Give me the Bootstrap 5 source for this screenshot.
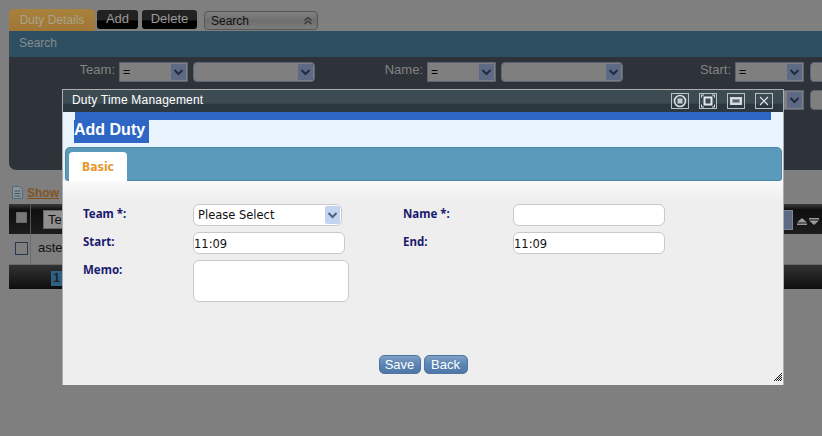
<!DOCTYPE html>
<html lang="en">
<head>
<meta charset="utf-8">
<title>Duty Time Management</title>
<link rel="stylesheet" href="https://cdn.jsdelivr.net/npm/bootstrap@5.3.0/dist/css/bootstrap.min.css">
<style>
html,body{height:436px;overflow:hidden}
body{background:#7f7f7f;font-family:"Liberation Sans",Arial,sans-serif;position:relative;width:822px;padding:9px 0 0 9px;color:#111}
.tabrow{height:22px;gap:0}
.duty-tab{width:86px;height:22px;background:linear-gradient(#a8823c,#a07636);border-radius:5px 5px 0 0;color:#a9a48c;font-size:12px;line-height:22px;text-align:center}
.blk{height:19px;margin-top:1px;background:linear-gradient(#222 0,#222 50%,#000 60%,#050505);border-radius:3px;color:#9a9a9a;font-size:13px;line-height:18px;text-align:center}
.b-add{width:41px;margin-left:2px}
.b-del{width:55px;margin-left:4px}
.search-drop{width:114px;height:19px;margin:2px 0 0 7px;border:1px solid #555;border-radius:4px;background:linear-gradient(#808080,#6e6e6e 55%,#7c7c7c);font-size:12px;line-height:18px;padding-left:6px;color:#111}
.search-drop svg{position:absolute;right:4px;top:4px}
.panel-head{height:26px;background:#2e4f62;color:#868c8c;font-size:12px;line-height:25px;padding-left:10px}
.panel-body{height:113px;background:#2d3338;border-radius:0 0 0 7px}
.frow{height:28px;padding-top:5px}
.flab{color:#838383;font-size:13px;text-align:right;line-height:16px;flex:none}
.l1{width:106px}.l2{width:108px}.l3{width:108px}
.op,.val{height:20px;flex:none;appearance:none;background-color:#7f7f7f;background-image:url("data:image/svg+xml,%3Csvg xmlns='http://www.w3.org/2000/svg' width='15' height='16'%3E%3Crect width='15' height='16' fill='%235d6a85'/%3E%3Cpath d='M3.5 6l4 4 4-4' fill='none' stroke='%23232b3d' stroke-width='2'/%3E%3C/svg%3E");background-repeat:no-repeat;background-position:right 1px center;border:1px solid #5c6672;font-size:12px;color:#000;padding:0 0 0 3px;font-family:inherit}
.op{width:69px;margin-left:4px}
.val{width:122px;margin-left:5px;border-radius:4px}
.val.cut{width:30px;margin-left:6px;background-image:none}
.show-row{height:34px;padding-top:16px;padding-left:3px;font-size:12px}
.show-row a{color:#83531d;font-weight:700;margin-left:4px;line-height:15px}
.grid-head{height:30px;background:linear-gradient(#3a3a3a,#0f0f0f 20%,#1d1d1d);position:relative}
.chk{width:13px;height:13px;flex:none;border:1px solid #243a50;background:#7f7f7f}
.hchk{background:#777;border-color:#6a6a6a;width:11px;height:11px;margin:8px 0 0 7px}
.sep{width:1px;background:#555;margin-left:3px;flex:none}
.te{width:60px;height:19px;margin:6px 0 0 12px;background:#8f8f8f;border:1px solid #666;color:#111;font-size:13px;line-height:17px;padding-left:4px}
.grid-row{height:31px;border-bottom:1px solid #6a6a6a}
.grid-row .chk{margin:8px 0 0 6px}
.grid-row .sep{background:#6a6a6a;margin-left:2px}
.aste{font-size:13px;color:#111;line-height:28px;margin-left:7px}
.grid-foot{height:24px;background:linear-gradient(#333,#0d0d0d)}
.pg{width:11px;height:15px;margin:6px 0 0 42px;background:#2f6183;color:#222;font-size:12px;font-weight:700;text-align:center;line-height:15px}
.right-tools{position:absolute;right:3px;top:6px}
.right-sel{width:15px;height:20px;background:#5d6a85;border:1px solid #7b8799;margin-right:4px}
.right-tools svg{margin-top:8px;margin-right:2px;display:block}
.right-tools svg:last-child{margin-right:0}

.dialog{position:absolute;left:62px;top:89px;width:722px;height:296px;border:1px solid #a9aeb0;background:#eee;font-family:"Liberation Sans",Arial,sans-serif}
.dlg-title{height:22px;background:linear-gradient(#3c4a52 0,#3c4a52 60%,#2c383f 65%);color:#fff;font-size:12px;letter-spacing:.2px;line-height:20px;padding-left:9px}
.winbtn{width:18px;height:16px;border:1px solid #b9c1c6;margin-top:3px;margin-left:10px}
.winbtn svg{display:block}
.win-wrap{margin-right:10px}
.dlg-band{height:35px;background:#eaf4ff;position:relative}
.blue-bar{height:8px;margin:0 12px 0 12px;background:#2d66c4}
.add-title{display:block;margin-left:11px;height:23px;background:#2d66c4;color:#fff;font-weight:700;font-size:16px;line-height:19px;width:75px;white-space:nowrap}
.dlg-tabs{height:34px;margin:0 1px 0 2px;background:#5b9aba;border:1px solid #4a86a6;border-radius:5px 5px 3px 3px;padding:4px 0 0 3px}
.basic-tab{width:58px;height:29px;background:#fff;border-radius:4px 4px 0 0;color:#e8982c;font-family:"DejaVu Sans",sans-serif;font-size:12px;font-weight:700;font-stretch:condensed;line-height:30px;text-align:center}
.dlg-body{height:204px;background:linear-gradient(#fafafa,#eee 20px);padding-top:23px;position:relative}
.frm{padding-left:20px}
.lab{font-family:"Noto Sans",sans-serif;font-size:11.500px;font-weight:700;color:#1a1a6e;flex:none;line-height:16px;padding-top:2px}
.lw1{width:110px}.lw2{width:110px}
.cell{flex:none}
.c1{width:210px}
.fld{display:block;height:22px;width:152px;border:1px solid #c9c9c9;border-radius:6px;background:#fff;font-family:"DejaVu Sans",sans-serif;font-size:11.500px;padding:2px 0 0 0;color:#111}
.fsel{width:149px;appearance:none;padding-left:4px;background-image:url("data:image/svg+xml,%3Csvg xmlns='http://www.w3.org/2000/svg' width='15' height='18'%3E%3Crect width='15' height='18' rx='2' fill='%23c3d4f0'/%3E%3Cpath d='M3.5 7l4 4 4-4' fill='none' stroke='%234d6185' stroke-width='2'/%3E%3C/svg%3E");background-repeat:no-repeat;background-position:right 1px center}
.fmemo{height:42px;width:156px;resize:none}
.r{margin-bottom:6px}
.actions{position:absolute;left:0;right:0;top:174px;gap:3px}
.sbtn{height:19px;border:1px solid #4d75a3;border-radius:5px;background:linear-gradient(#7fa0c4,#5a84b4 50%,#4f78a8);color:#fff;font-size:13px;line-height:17px;padding:0;text-align:center}
.s-save{width:42px}.s-back{width:44px}
.grip{position:absolute;right:1px;bottom:4px}
</style>
</head>
<body>
<div class="d-flex tabrow">
  <div class="duty-tab">Duty Details</div>
  <div class="blk b-add">Add</div>
  <div class="blk b-del">Delete</div>
  <div class="search-drop position-relative">Search
    <svg width="10" height="10" viewBox="0 0 10 10"><path d="M1.500 4.500L5 1.500 8.500 4.500M1.500 8L5 5 8.500 8" fill="none" stroke="#333" stroke-width="1.100"/></svg>
  </div>
</div>
<div class="panel-head">Search</div>
<div class="panel-body">
  <div class="d-flex frow">
    <div class="flab l1">Team:</div><select class="op"><option>=</option></select><select class="val"></select>
    <div class="flab l2">Name:</div><select class="op"><option>=</option></select><select class="val"></select>
    <div class="flab l3">Start:</div><select class="op"><option>=</option></select><select class="val cut"></select>
  </div>
  <div class="d-flex frow">
    <div class="flab l1"></div><select class="op"></select><select class="val"></select>
    <div class="flab l2"></div><select class="op"></select><select class="val"></select>
    <div class="flab l3"></div><select class="op"></select><select class="val cut"></select>
  </div>
</div>
<div class="show-row d-flex">
  <svg width="11" height="13" viewBox="0 0 11 13"><path d="M.5.500h7l3 3v9H.500z" fill="#8a969c" stroke="#4f6a7c"/><path d="M2.500 5h6M2.500 7.500h6M2.500 10h6" stroke="#40525f"/></svg>
  <a href="#">Show</a>
</div>
<div class="grid-head d-flex">
  <div class="chk hchk"></div><div class="sep"></div><div class="te">Te</div>
  <div class="right-tools d-flex">
    <div class="right-sel"></div>
    <svg width="10" height="7" viewBox="0 0 10 7"><path d="M5 0l5 4.500H0z" fill="#9a9a9a"/><rect y="5.500" width="10" height="1.500" fill="#9a9a9a"/></svg>
    <svg width="10" height="7" viewBox="0 0 10 7"><rect width="10" height="1.500" fill="#9a9a9a"/><path d="M0 2.500h10L5 7z" fill="#9a9a9a"/></svg>
  </div>
</div>
<div class="grid-row d-flex">
  <div class="chk"></div><div class="sep"></div><div class="aste">aste</div>
</div>
<div class="grid-foot d-flex"><div class="pg">1</div></div>

<div class="dialog">
  <div class="dlg-title d-flex justify-content-between">
    <span>Duty Time Management</span>
    <div class="d-flex win-wrap">
      <div class="winbtn"><svg width="16" height="14" viewBox="0 0 16 14"><circle cx="8" cy="7" r="5.500" fill="none" stroke="#d8dde0" stroke-width="1.600"/><rect x="5.500" y="4.500" width="5" height="5" fill="#c4cacd"/></svg></div>
      <div class="winbtn"><svg width="16" height="14" viewBox="0 0 16 14"><rect x="4.500" y="3.500" width="7" height="7" fill="none" stroke="#e3e7ea" stroke-width="2"/><path d="M1.500 1v2.500M1.500 1H4M14.500 1v2.500M14.500 1H12M1.500 13v-2.500M1.500 13H4M14.500 13v-2.500M14.500 13H12" fill="none" stroke="#e3e7ea"/></svg></div>
      <div class="winbtn"><svg width="16" height="14" viewBox="0 0 16 14"><rect x="2" y="3" width="12" height="8" fill="#d5dade"/><rect x="4.500" y="5.500" width="7" height="3" fill="#54636c"/></svg></div>
      <div class="winbtn"><svg width="16" height="14" viewBox="0 0 16 14"><path d="M4 3l8 8M12 3l-8 8" stroke="#e3e7ea" stroke-width="1.200"/></svg></div>
    </div>
  </div>
  <div class="dlg-band">
    <div class="blue-bar"></div>
    <div class="add-title">Add Duty</div>
  </div>
  <div class="dlg-tabs"><div class="basic-tab">Basic</div></div>
  <div class="dlg-body">
    <div class="frm">
      <div class="d-flex r">
        <div class="lab lw1">Team *:</div>
        <div class="cell c1"><select class="fld fsel"><option>Please Select</option></select></div>
        <div class="lab lw2">Name *:</div>
        <div class="cell"><input class="fld" type="text"></div>
      </div>
      <div class="d-flex r">
        <div class="lab lw1">Start:</div>
        <div class="cell c1"><input class="fld" type="text" value="11:09"></div>
        <div class="lab lw2">End:</div>
        <div class="cell"><input class="fld" type="text" value="11:09"></div>
      </div>
      <div class="d-flex r">
        <div class="lab lw1">Memo:</div>
        <div class="cell c1"><textarea class="fld fmemo"></textarea></div>
      </div>
    </div>
    <div class="actions d-flex justify-content-center">
      <button type="button" class="sbtn s-save">Save</button>
      <button type="button" class="sbtn s-back">Back</button>
    </div>
    <svg class="grip" width="8" height="8" viewBox="0 0 8 8" shape-rendering="crispEdges"><path d="M7 0h1v1H7zM6 1h1v1H6zM7 2h1v1H7zM5 2h1v1H5zM4 3h1v1H4zM6 3h1v1H6zM3 4h1v1H3zM5 4h1v1H5zM7 4h1v1H7zM2 5h1v1H2zM4 5h1v1H4zM6 5h1v1H6zM1 6h1v1H1zM3 6h1v1H3zM5 6h1v1H5zM7 6h1v1H7zM0 7h1v1H0zM2 7h1v1H2zM4 7h1v1H4zM6 7h1v1H6z" fill="#222"/></svg>
  </div>
</div>
<script src="https://cdn.jsdelivr.net/npm/bootstrap@5.3.0/dist/js/bootstrap.bundle.min.js"></script>
</body>
</html>
